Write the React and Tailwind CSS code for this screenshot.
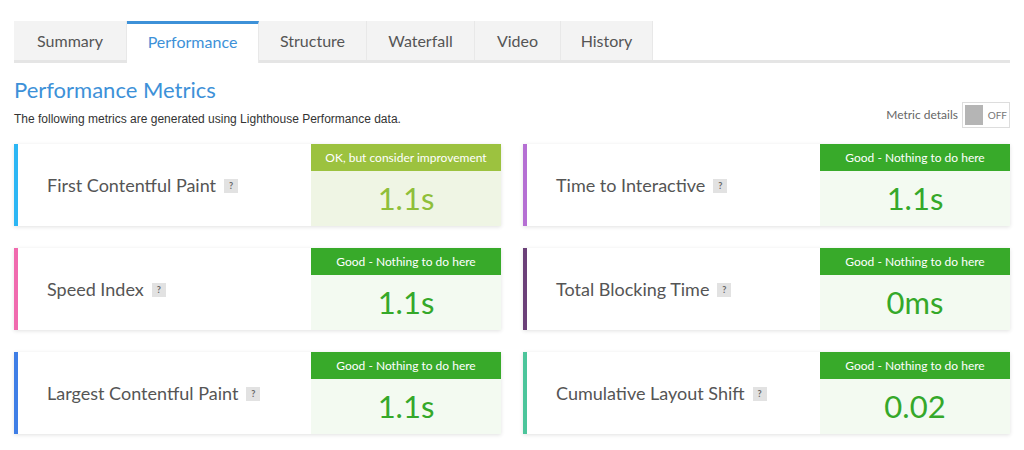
const tabs = [
  { label: 'Summary', w: 'w-[113px]' },
  { label: 'Performance', w: 'w-[132px]', active: true },
  { label: 'Structure', w: 'w-[108px]' },
  { label: 'Waterfall', w: 'w-[108px]' },
  { label: 'Video', w: 'w-[86px]' },
  { label: 'History', w: 'w-[92px]' },
]

const metrics = [
  { label: 'First Contentful Paint', value: '1.1s', border: 'border-[#2cb6f4]', ok: true },
  { label: 'Time to Interactive', value: '1.1s', border: 'border-[#b56fd3]' },
  { label: 'Speed Index', value: '1.1s', border: 'border-[#f06aae]' },
  { label: 'Total Blocking Time', value: '0ms', border: 'border-[#6b4078]' },
  { label: 'Largest Contentful Paint', value: '1.1s', border: 'border-[#3f7ee6]' },
  { label: 'Cumulative Layout Shift', value: '0.02', border: 'border-[#4cc59b]' },
]

function MetricCard({ m }) {
  return (
    <div className={`flex h-[82px] bg-white border-l-4 ${m.border} shadow-[0_1px_4px_rgba(0,0,0,0.12)]`}>
      <div className="flex-1 flex items-center pl-[29px]">
        <span className="text-[18px] text-[#555]">{m.label}</span>
        <span className="ml-[8px] mt-[2px] w-[14px] h-[14px] bg-[#e2e2e2] text-[#666] text-[9px] font-bold flex items-center justify-center">?</span>
      </div>
      <div className="w-[190px] flex flex-col">
        <div className={`h-[27px] flex items-center justify-center text-white text-[12px] ${m.ok ? 'bg-[#9cc23f]' : 'bg-[#38aa2a]'}`}>
          {m.ok ? 'OK, but consider improvement' : 'Good - Nothing to do here'}
        </div>
        <div className={`flex-1 flex items-center justify-center text-[31px] ${m.ok ? 'bg-[#eff5e4] text-[#8fbf3a]' : 'bg-[#f3faf1] text-[#35a82a]'}`}>
          {m.value}
        </div>
      </div>
    </div>
  )
}

export default function App() {
  return (
    <div className="w-[1024px] h-[450px] bg-white px-[14px] pt-[21px] overflow-hidden" style={{ fontFamily: 'Lato, "Open Sans", sans-serif' }}>
      {/* tabs */}
      <div className="flex border-b-[3px] border-[#e5e5e5]">
        {tabs.map(t => (
          <div
            key={t.label}
            className={`${t.w} h-[39px] -mb-[3px] flex items-center justify-center text-[16px] border-r border-[#e8e8e8] ${t.active ? 'bg-white text-[#3d91d8] border-t-[3px] border-t-[#3d91d8] h-[42px] pb-[3px]' : 'bg-[#f3f3f3] text-[#555] mb-0'}`}
          >
            {t.label}
          </div>
        ))}
      </div>

      <h1 className="mt-[12px] text-[22px] leading-[30px] text-[#3d91d8]">Performance Metrics</h1>

      <div className="flex items-center justify-between -mt-[3px]">
        <p className="text-[12px] text-[#333] mt-[7px]" style={{ fontFamily: '"Liberation Sans", Arial, sans-serif' }}>
          The following metrics are generated using Lighthouse Performance data.
        </p>
        <div className="flex items-center gap-[4px]">
          <span className="text-[12px] text-[#666]">Metric details</span>
          <div className="w-[48px] h-[26px] border border-[#ddd] flex items-center p-[2px]">
            <div className="w-[20px] h-[20px] bg-[#b5b5b5]" />
            <span className="ml-[5px] text-[10px] text-[#777]">OFF</span>
          </div>
        </div>
      </div>

      <div className="grid grid-cols-2 gap-x-[22px] gap-y-[22px] mt-[16px]">
        {metrics.map(m => <MetricCard key={m.label} m={m} />)}
      </div>
    </div>
  )
}
